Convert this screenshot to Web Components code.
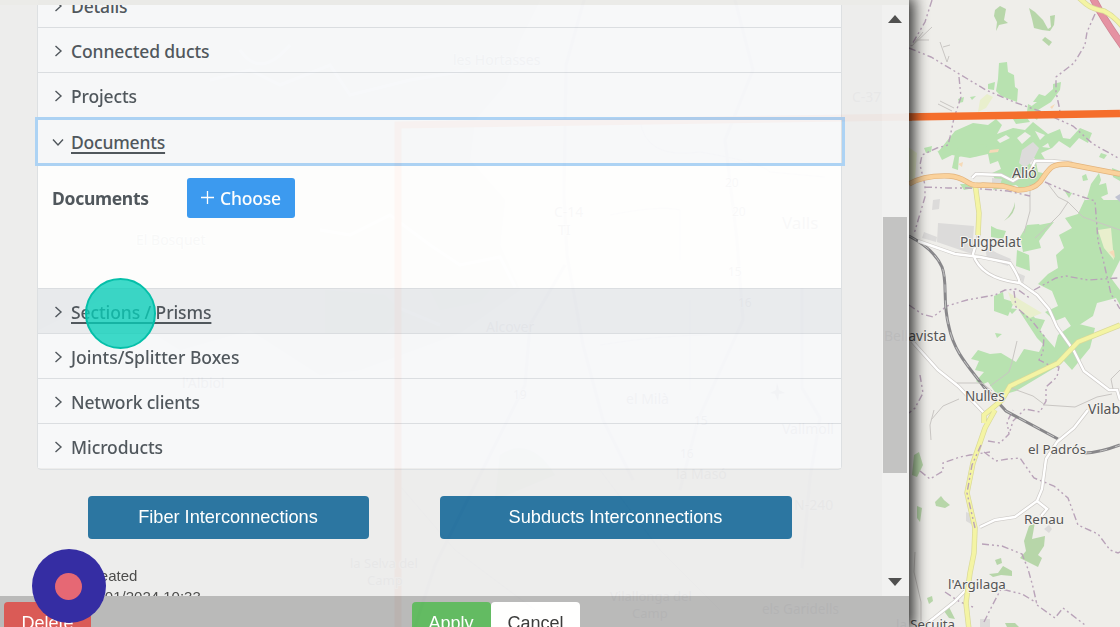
<!DOCTYPE html>
<html lang="en">
<head>
<meta charset="utf-8">
<title>Network element editor</title>
<style>
html,body{margin:0;height:100%;overflow:hidden;background:#efeeea}
</style>
</head>
<body>
<network-app></network-app>
<script>
function define(name, html, setup) {
  const t = document.createElement('template');
  t.innerHTML = html;
  customElements.define(name, class extends HTMLElement {
    constructor() {
      super();
      this.attachShadow({mode: 'open'}).appendChild(t.content.cloneNode(true));
    }
    connectedCallback() { if (setup) setup(this, this.shadowRoot); }
  });
}

define('map-view', `
<style>
:host{display:block;width:1120px;height:627px}
svg{display:block}
.g{fill:#b8e2b0}
.g2{fill:#add19e;opacity:.85}
.u{fill:#dcdbda}
.b{fill:none;stroke:#b9a3b9;stroke-width:1.4;stroke-dasharray:7 3 2 3 2 3}
.w{fill:none;stroke:#fff;stroke-width:2.4}
.wc{fill:none;stroke:#cfccc9;stroke-width:3.8}
.t{fill:none;stroke:#c9c6c3;stroke-width:1}
.yc{fill:none;stroke:#d9d998;stroke-width:5.400}
.y{fill:none;stroke:#f4f4a4;stroke-width:4}
.oc{fill:none;stroke:#e3b37c;stroke-width:5.400}
.o{fill:none;stroke:#fad29c;stroke-width:4}
text{font:14px "Noto Sans",sans-serif;fill:#555;stroke:#f4f3f0;stroke-width:2px;paint-order:stroke;stroke-linejoin:round}
.s{font-size:12px}
.under{opacity:.75}
</style>
<svg width="1120" height="627" viewBox="0 0 1120 627">
<rect width="1120" height="627" fill="#efeeea"/>
<!-- terrain west of the town -->
<g class="under">
<path fill="#d5e6c8" d="M38 0H540L520 40 505 85 475 120 470 160 505 200 500 245 520 290 460 333 360 370 320 375 250 330 180 350 100 300 38 330Z"/>
<path fill="none" stroke="#fff" stroke-width="3" d="M210 80l40-10 30 15 50-20 20 30 60-15 60-10M320 230l30 5 40-20 40 30 30 20 40-8 15 30M330 310l50-10 60 25M240 50q20 30 50-5"/>
<path class="g" d="M325 290l60 5 20 20-20 18h-60zM430 290h60l-10 12-40 8zM500 455q30-20 55 20l-60 25z"/>
<path class="t" style="stroke-width:3" d="M584 0l-18 65-2 130 3 60 16 90 20 75 30 60M565 265l-35 60-5 60-40 80-50 100-20 62M735 0l18 70-28 70 12 100 6 80-45 100-18 70M802 288v100l18 30-10 60-8 90"/>
<path class="t" d="M640 120q5 40 60 32 60 10 70 20l55 5M610 215q50-10 70-5v50M690 300v90M600 345q60-10 110-10M395 480l60 70 80 60M600 470l60 80 60 60"/>
</g>
<path fill="none" stroke="#f07030" stroke-width="7" d="M398 627V125L912 117"/>
<g class="under">
<text x="453" y="65">les Hortasses</text><text x="554" y="217">C-14</text><text x="558" y="235">TI</text>
<text x="782" y="229" style="font-size:17px">Valls</text><text x="136" y="245">El Bosquet</text><text x="182" y="388">l'Albiol</text>
<text x="486" y="332">Alcover</text><text x="626" y="404">el Milà</text><text x="782" y="434">Vallmoll</text><text x="676" y="479">la Masó</text>
<text x="852" y="102">C-37</text><text x="794" y="510">N-240</text><text x="350" y="568" style="font-size:13px">la Selva del</text><text x="367" y="585" style="font-size:13px">Camp</text>
<text x="610" y="601" style="font-size:13px">Vilallonga del</text><text x="632" y="618" style="font-size:13px">Camp</text><text x="762" y="614" style="font-size:13.500px">els Garidells</text>
<text class="s" x="725" y="187">20</text><text class="s" x="732" y="216">20</text><text class="s" x="728" y="276">15</text><text class="s" x="738" y="307">16</text><text class="s" x="513" y="399">19</text><text class="s" x="694" y="425">15</text><text class="s" x="680" y="458">16</text>
</g>
<path fill="#999" d="M777 383l2 7 6 3-6 1-1 7-3-7-5-1 6-3z"/>

<!-- woodland and crops -->
<path class="g2" d="M995 10l5-4 6 3-2 11 4 3-9 2-3 6 1-9-3-6zM1029 8l6 4 8 8 5 9 3-2-1-11 5-1-1 10-4 6-8-1-8-2-2-9zM1042 40l3-3 7 5-3 4z"/>
<path class="g" d="M999 63l8-1 1 10 6 3 1 12 3 2-1 13-16-6-5-5 2-12zM988 84l7-2-1 8-6-1zM1053 84l8-2-1 8-9 12-13 8-9-2 8-6h-4l6-8 6 2 8-7zM958 99l6-2-1 5-4 1zM970 97l6-1-4 4z"/>
<path class="g" d="M955 131l18-8 15 2 8-6 6 6-5 9 16-6 12 2 8-8 15 12 12-5 3 9 7 1 10-11 12 5-4 10-9-5-9 10-11-7-7 7-11 5 5 8-10 1 2 10 9 2-7 11-18 5-6-5-23 5 3-8-4-9 9-4-3-8-8 3-2-10-18 4-18-3-10 5-4-8z"/>
<path class="g" d="M924 148l8-2-1 6-5 1zM937 151l10-1-4 4zM959 147h7l-3 8-4 2-1 13-6-2 3-14zM977 145l10-1-1 3-9 1zM971 154l8-1-1 3-7 1zM1010 114l15 1 5 7-14 2zM1028 104l13 7-4 9-10-8zM1101 153l6 2-3 4-5-2zM960 184h10l4 4-10 2z"/>
<path fill="#efeeea" d="M997 140l9-5 4 3-10 5zM1017 138l8-6 6 4-9 8zM1035 131l10 4-5 5zM1027 160l6-3 4 4-6 4zM1042 147l6-4 2 5z"/>
<path class="g" d="M1082 176l4-2 2 6-5 1zM1091 184l8-11 2 7-2 5 7-2 2 11-7 3 8 9-13 4-4-8-5-4zM1064 190l8 3-3 5zM1112 168l8 3v10l-7-4z"/>
<path class="g" d="M1085 200h35v60l-9 18 9 12v15l-4-7-19 5-4 13-20 13-8-12-10 4-10-9 13-6-6-15-14-7 10-10 10-6-2-13 8-7-5-13 13-7-7-10 13-4 7-15-2-6z"/>
<path class="g" d="M1020 237l7-12 12-1 6 9-6 8 2 7-18 4-2-11zM1034 226l20-4-10 12zM991 226l6 3 9 2-3 8-12-2zM1017 250l12 5 1 16-14-5zM994 296l9-4 1 7 10 3-6 14-14-5zM1020 312l9-2 6 8 10 2-5 11 15 17 16 5-10 11-45 27-14 4-5 0-9-13-7 3-5-4 8-9-9-2 4-9-8-2 7-9 12 4 11-1 15 9 8-13 15 3 4-8-6-6zM995 333l7 1-5 4z"/>
<path class="g" d="M1075 323l20 5-5 20-18 22-18-20 4-15zM1007 308l10 1-5 5z"/>
<path class="g2" d="M914 455l5-3 4 13-6 12-5-2zM935 502l6-6 3 4 6 5-5 3-9-2zM917 506l5 2-2 14-3-4zM1029 526l6-4-3 17 13-3-1 10-6 9 4 3-4 9-8-4-10-5 6-7-2-10zM995 560l6-2 1 5-5 2zM989 574l9-1 5-7 9 5 0 5-11-1-8 2zM927 598l5-2 1 5-4 3zM944 611l5-4 6 12-6-1zM1005 623h10l4 4h-12z"/>
<path fill="#e9efcd" d="M980 100l7-6 6 3-7 11-8 4zM905 145l12 8-2 25-10 5zM1098 230l6 18 10 12-3-32zM1008 292l14 9 20 12-12 5-18-14z"/>
<path class="g2" d="M1015 202q1 12-11 19 9-8 11-19z"/>
<path fill="#f6dab8" d="M1050 107l5-3-3 5zM990 150l9-1-1 3-9 1zM958 164l5-2-1 5zM1109 252l5-2 1 8z"/>
<path class="u" d="M938 223l36 3-2 28-35-12zM985 246l12 7 14 6-3 7-21-7zM1022 150l11-8 6 6-6 12-8 8-6-5zM933 200l7-1-1 10-7 1zM966 512l5 2v10l-5-3zM1018 273l7 3-2 8zM1044 529l5-4 3 4-3 4zM980 619h10v8h-10zM992 178l10 1-2 6-8-2zM924 232l13 5-1 5-14-4z"/>
<path fill="#c0c3d2" d="M1115 197l5-3v8z"/>

<path class="t" d="M912 46l20-19M912 46l11-14M915 40l14 0M940 42l7 20 2-6M943 47l7-2M938 104l14 7M940 101l14 7M1048 184l10 13 10 5-8 12-15 15-10 9M1068 202l15 15 37 13M1030 184v27l-6 22"/>
<path class="b" d="M932 0l-7 22-14 24M909 48l22 9 30 18 25 15 28 12 28 10 31 14 20 18 27 15M959 77l2 20-7 21-4 19-2 8-11 3-15 7-2 10 5 20 0 12-11 37M925 187l23 1h20l40 3 22 5M1045 182l23 10 27 9 3 40 5 18 8 35 9 15M1095 14l-8 18-2 13-11 18-18 14 0 15 3 14 1 6M909 305l13 9 11 3 14-11 20-6 28-5 10-5 12-1 14 10M1034 290l22-12 10-2 22 4 30-2M1014 291l2 16 16 14 12 15-1 16-4 8 10 5 10 2-2 10-11 10v14l-6 11-15-3-12 12-3 10M920 375l3 18-8 15-6 5M920 471l10 8 13-8v-8l17-6 10-2 20-3M988 441l12 2 9-9-2-12 6-12M984 452l12 9 12-2 12-1 14 20 20 8 14 12 10 27 20 9 12 16 8 3 14-7M982 544l20 2 20 8 6 15 5 18 4 18 18 13 8-10 22 17M984 622l8-16 9-17 21 5 15 9M945 592l15 10 13 5"/>

<!-- railway -->
<g fill="none"><path stroke="#88878a" stroke-width="3" d="M909 236q25 13 33 31c6 16 0 34 7 60 5 25 20 40 35 60l22 24 52 28M1084 453q15 0 36-8"/><path stroke="#c4c4c4" stroke-width="1" stroke-dasharray="8 8" d="M909 236q25 13 33 31c6 16 0 34 7 60 5 25 20 40 35 60l22 24 52 28M1084 453q15 0 36-8"/></g>

<path class="wc" d="M918 241l37 13 25 3 30 6q8 12 10 20l17 12 12 14 8 18 17 24 10 20 25 19 8 0 3 10M979 234l-6 20q8 25 47 29M911 340l27 30 20 16 26 27M1088 410l-14 18-17 14-11 17-4 30-5 12-22 16-20 3-15 7M1037 501l10 8-6 7M922 627l12-9 20-16 15-15M972 178l4-4 25 1 12 6 18-11 4-9 17 0 20 2"/>
<path class="w" d="M918 241l37 13 25 3 30 6q8 12 10 20l17 12 12 14 8 18 17 24 10 20 25 19 8 0 3 10M979 234l-6 20q8 25 47 29M911 340l27 30 20 16 26 27M1088 410l-14 18-17 14-11 17-4 30-5 12-22 16-20 3-15 7M1037 501l10 8-6 7M922 627l12-9 20-16 15-15M972 178l4-4 25 1 12 6 18-11 4-9 17 0 20 2"/>
<path class="t" d="M931 440l-1-15 4-15M931 420l12-14 16-7M1011 388l22 8 12 9 30 2 22-10 15-3M915 552l-1 20 7 30v25M957 383l25 0 10 8M1120 370l-9 9 2 10M1017 341l-5 21-3 10-19 14"/>
<path class="yc" d="M975 183l4 30-1 22M984 423l0-8 18-15 8-14 48-23 20-21 42-17M995 410l-10 18-12 35-6 30 8 35-1 25-4 20-4 30 3 27"/>
<path class="y" d="M975 183l4 30-1 22M984 423l0-8 18-15 8-14 48-23 20-21 42-17M995 410l-10 18-12 35-6 30 8 35-1 25-4 20-4 30 3 27"/>
<path class="b" d="M981 445l-9 20-5 28 8 35"/>
<path class="oc" d="M909 184q15-9 40-8c20 1 15 11 34 9l20 1 15 4q15 0 22-8c10-14 10-18 28-18l52 10"/>
<path class="o" d="M909 184q15-9 40-8c20 1 15 11 34 9l20 1 15 4q15 0 22-8c10-14 10-18 28-18l52 10"/>
<path fill="none" stroke="#cf8594" stroke-width="7.500" d="M1091-6q10 22 34 55"/><path fill="none" stroke="#e592a2" stroke-width="6" d="M1091-6q10 22 34 55"/>
<path class="yc" d="M1077-4l9 8q6 5 18 7 10 5 18 15"/><path class="y" d="M1077-4l9 8q6 5 18 7 10 5 18 15"/>
<path stroke="#f56e2c" stroke-width="7.5" d="M905 117L1120 113.500"/>
<text x="1012" y="178">Alió</text>
<text x="960" y="247" style="font-size:13.700px">Puigpelat</text>
<text x="884" y="341">Bellavista</text>
<text x="965" y="401" style="font-size:13.500px">Nulles</text>
<text x="1088" y="414">Vilabella</text>
<text x="1028" y="454" style="font-size:13.400px">el Padrós</text>
<text x="1024" y="524" style="font-size:13.400px">Renau</text>
<text x="948" y="589" style="font-size:13.400px">l'Argilaga</text>
<text x="896" y="629" style="font-size:13.200px">la Secuita</text>
</svg>`);

define('accordion-row', `
<style>
:host{display:block;box-sizing:border-box;height:45px;border-top:1px solid #dadde1;background:#f7f8fa;color:#495057}
:host([hover]){background:#e8eaee}
:host([open]){position:relative;height:48px;border-color:transparent}
:host([open])::after{content:"";position:absolute;inset:-1.500px -3.500px -.500px -3px;border:3px solid #a9d1f5}
.h{display:flex;align-items:center;height:100%;padding:1px 0 0 14px;box-sizing:border-box}
svg{flex:none;width:12px;height:14px;margin:0 7px 0 0;fill:none;stroke:#495057;stroke-width:1.4}
:host([open]) .h{padding-top:0}
:host([open]) svg{transform:rotate(90deg)}
span{white-space:nowrap;font:500 17.500px/24px "Noto Sans",sans-serif}
:host([open]) span,:host([hover]) span{text-decoration:underline;text-decoration-thickness:1.500px;text-underline-offset:2.500px}
</style>
<div class="h"><svg viewBox="0 0 12 14"><path d="M3.500 2l5.500 5-5.500 5"/></svg><span><slot></slot></span></div>`,
(el, r) => { r.querySelector('span').style.letterSpacing = (el.getAttribute('track') || -0.15) + 'px'; });

define('documents-field', `
<style>
:host{display:flex;height:123px;box-sizing:border-box;padding:13px 14px 0;background:#fefefe;color:#495057;font:700 17.500px/40px "Noto Sans",sans-serif}
b{width:135px;letter-spacing:-.3px;font-weight:700}
button{display:flex;align-items:center;width:108px;height:40px;margin:0;padding:0 0 0 14px;border:0;border-radius:3px;background:#3497f1;color:#fff;font:500 17.500px "Noto Sans",sans-serif;letter-spacing:-.2px}
svg{width:13px;height:13px;margin:-2px 6px 0 0;stroke:#fff;stroke-width:1.3}
</style>
<b>Documents</b><button><svg viewBox="0 0 13 13"><path d="M6.500 0v13M0 6.500h13"/></svg>Choose</button>`);

define('action-button', `
<style>
:host{display:flex;align-items:center;justify-content:center;box-sizing:border-box;border-radius:4px;color:#fff;white-space:nowrap;font:18px "Liberation Sans",sans-serif}
</style><slot></slot>`);

define('edit-panel', `
<style>
:host{display:flex;flex-direction:column;width:909px;height:627px;box-sizing:border-box;background:#ededed;opacity:.955;overflow:visible;box-shadow:2px 0 14px 3px rgba(0,0,0,.85);font-family:"Liberation Sans",sans-serif}
.top{height:5px;background:#eaeae8;flex:none}
.mid{display:flex;height:590.500px;flex:none;overflow:hidden}
.body{width:882px;overflow:hidden}
.acc{width:803px;height:487px;margin:-24px 0 0 37px;border:1px solid #dcdfe2;border-radius:4px;overflow:visible}
.btns{display:flex;gap:71px;margin:26px 0 0 87.500px}
.btns action-button{height:43px;background:#22709e;width:281px;font-size:18.200px;padding-bottom:1px;letter-spacing:-.02px}
.btns action-button+action-button{width:352px}
.meta{margin:25.500px 0 0 84px;font-size:15px;line-height:21px;color:#444}
.bar{display:flex;flex-direction:column;align-items:center;width:25px;background:#f1f1f1;padding-right:2px}
.bar i{display:block;width:24px;height:256px;background:#c1c1c1;margin:194px 0 105px}
.bar svg{display:block;width:14px;height:8px;margin-top:10px;fill:#484848}
.bar svg+i+svg{margin-top:0}
.foot{flex:1;min-height:0;display:flex;align-items:flex-start;padding:6px 0 0 4px;background:#b7b7b7;overflow:hidden}
.foot action-button{height:43px}
</style>
<div class="top"></div>
<div class="mid">
<div class="body">
<div class="acc">
<accordion-row>Details</accordion-row>
<accordion-row track="-.12">Connected ducts</accordion-row>
<accordion-row>Projects</accordion-row>
<accordion-row open track="-.2">Documents</accordion-row>
<documents-field></documents-field>
<accordion-row hover track="-.1">Sections / Prisms</accordion-row>
<accordion-row track="0.01">Joints/Splitter Boxes</accordion-row>
<accordion-row>Network clients</accordion-row>
<accordion-row track="-.08">Microducts</accordion-row>
</div>
<div class="btns"><action-button>Fiber Interconnections</action-button><action-button>Subducts Interconnections</action-button></div>
<div class="meta">Created<br>10/01/2024 10:33</div>
</div>
<div class="bar"><svg viewBox="0 0 14 8"><path d="M0 8L7 0l7 8z"/></svg><i></i><svg viewBox="0 0 14 8"><path d="M0 0l7 8 7-8z"/></svg></div>
</div>
<div class="foot">
<action-button style="width:87px;background:#d9534f">Delete</action-button>
<action-button style="width:79px;background:#5cb85c;margin-left:320.500px">Apply</action-button>
<action-button style="width:89px;background:#fff;color:#333;margin-left:.5px">Cancel</action-button>
</div>`);

define('click-marker', `
<style>:host{display:block;box-sizing:border-box;width:71px;height:71px;border-radius:50%;border:2.500px solid #05bfa9;background:rgba(5,207,185,.77)}</style>`);

define('record-badge', `
<style>:host{display:flex;align-items:center;justify-content:center;width:74px;height:74px;border-radius:50%;background:#352da3}
i{width:27px;height:27px;border-radius:50%;background:#e66874}</style><i></i>`);

define('network-app', `
<style>
:host{display:grid;width:1120px;height:627px;overflow:hidden;position:relative}
map-view,edit-panel{grid-area:1/1}
click-marker{position:absolute;left:84.500px;top:277.500px}
record-badge{position:absolute;left:31.500px;top:549px}
</style>
<map-view></map-view><edit-panel></edit-panel><click-marker></click-marker><record-badge></record-badge>`);
</script>
</body>
</html>
